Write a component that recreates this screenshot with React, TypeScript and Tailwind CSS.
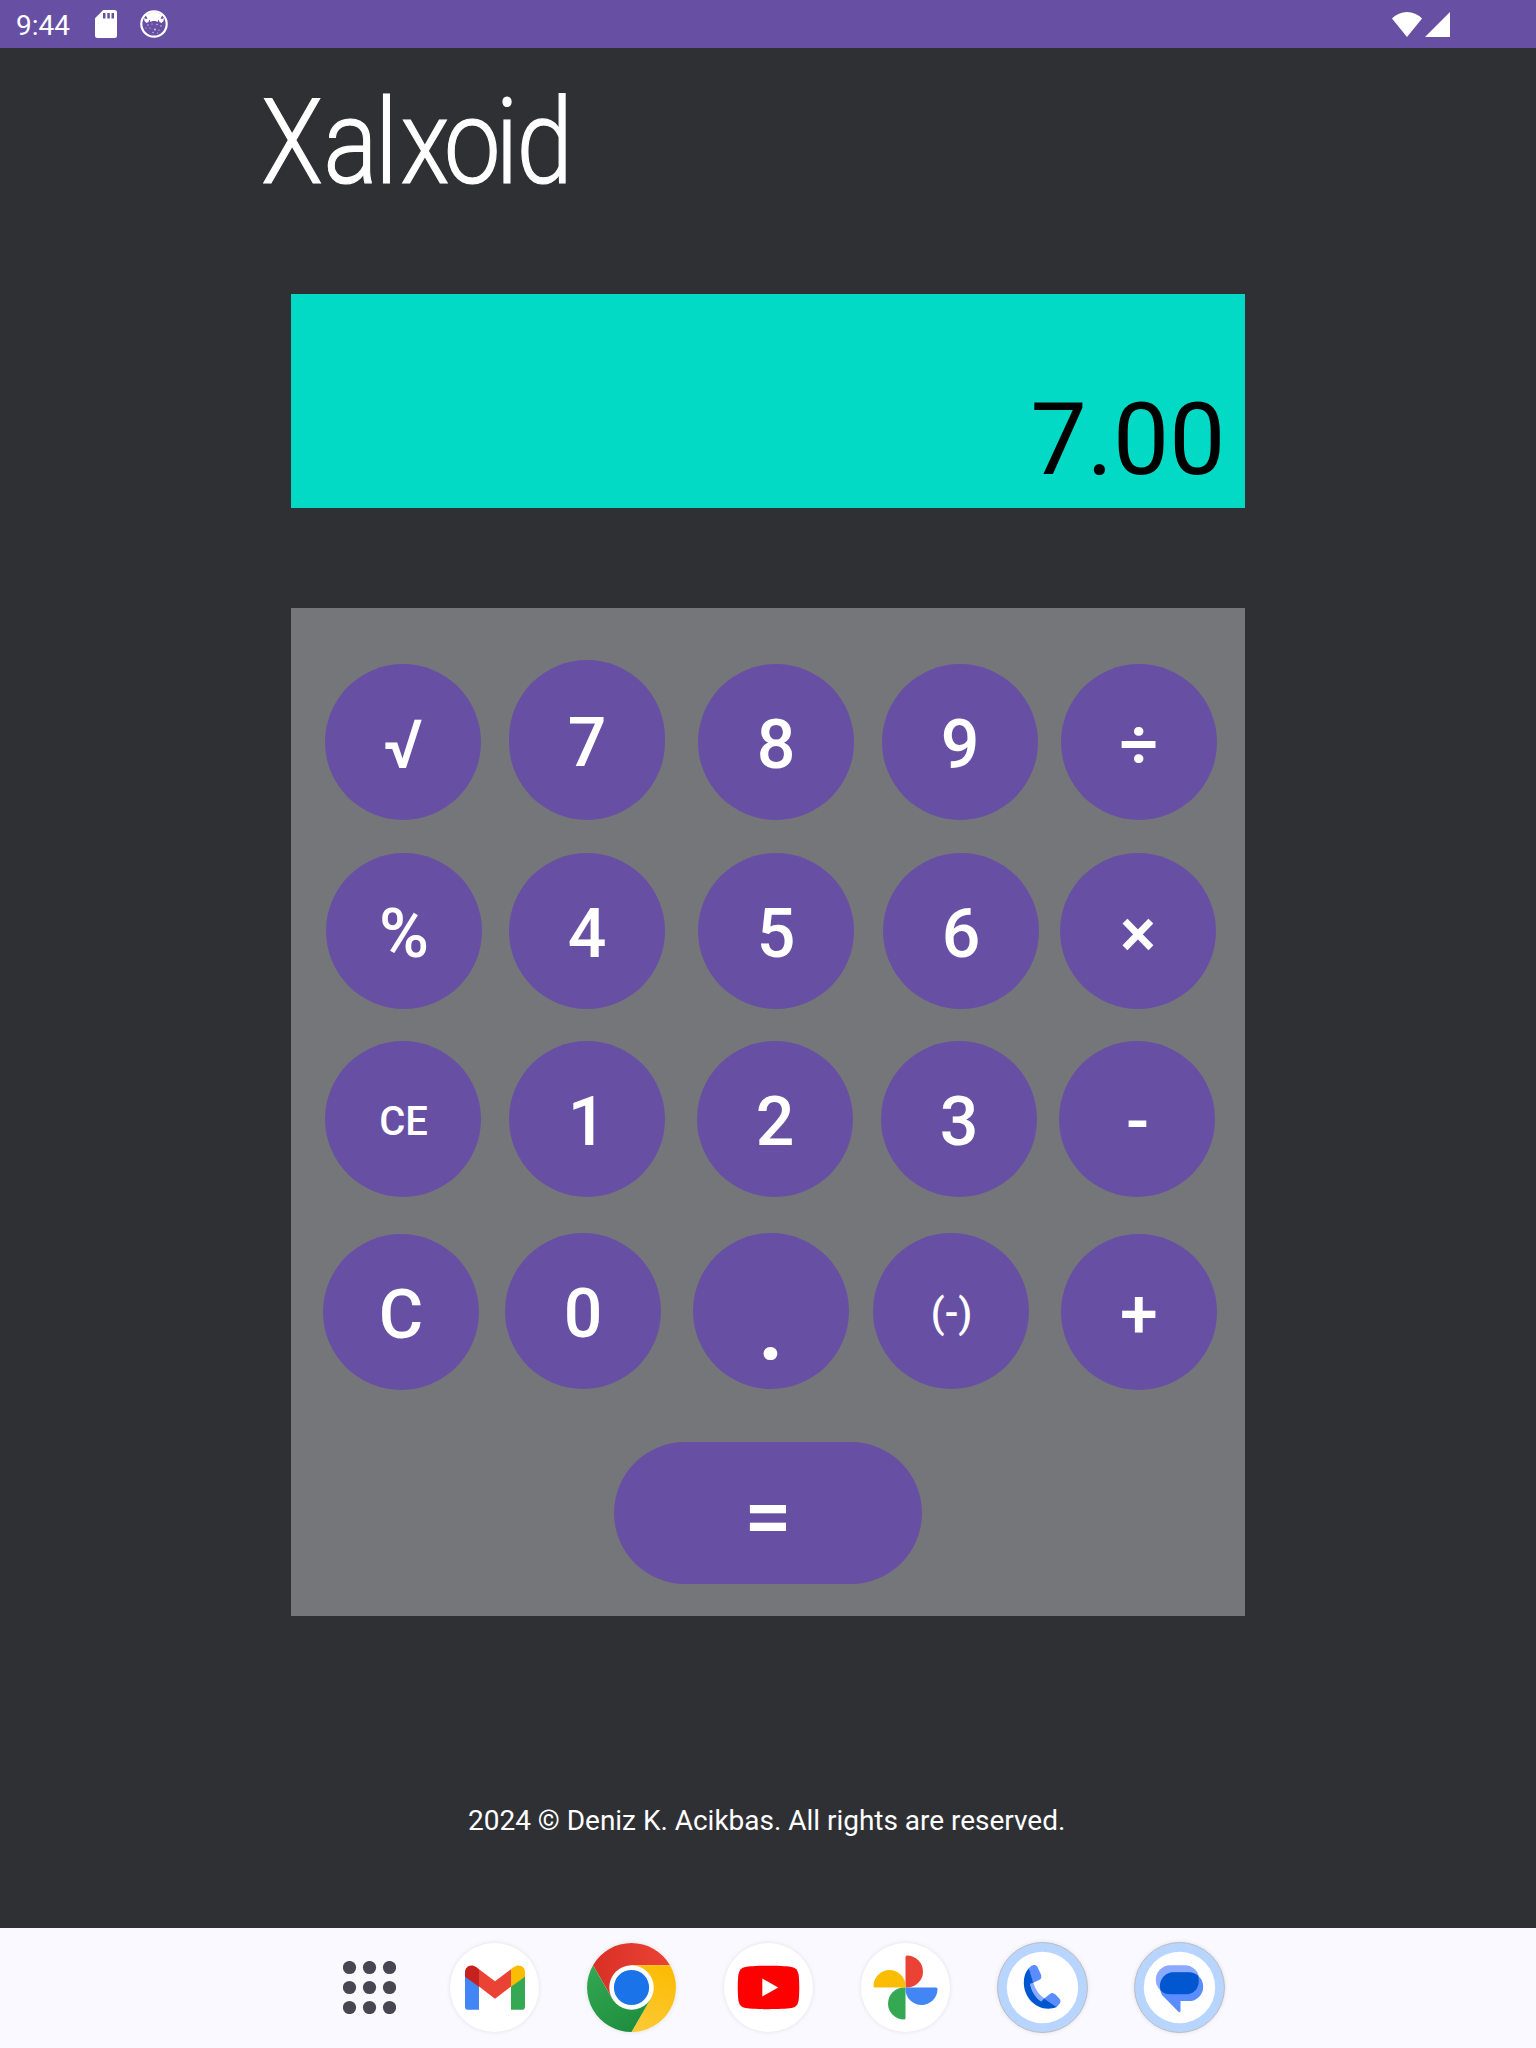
import type { ReactNode } from "react";

type Key = { label: string; box: string; text?: string };

const rows: { row: string; keys: Key[] }[] = [
  {
    row: "h-[160px]",
    keys: [
      { label: "√", box: "ml-[34px] mt-1" },
      { label: "7", box: "ml-[28px] h-[160px]" },
      { label: "8", box: "ml-[33px] mt-1" },
      { label: "9", box: "ml-[28px] mt-1" },
      { label: "÷", box: "ml-[23px] mt-1" },
    ],
  },
  {
    row: "mt-[33px] h-[156px]",
    keys: [
      { label: "%", box: "ml-[35px]" },
      { label: "4", box: "ml-[27px]" },
      { label: "5", box: "ml-[33px]" },
      { label: "6", box: "ml-[29px]" },
      { label: "×", box: "ml-[21px]" },
    ],
  },
  {
    row: "mt-[32px] h-[156px]",
    keys: [
      { label: "CE", box: "ml-[34px]", text: "text-[40px] pt-[5px] pl-px" },
      { label: "1", box: "ml-[28px]" },
      { label: "2", box: "ml-[32px]" },
      { label: "3", box: "ml-[28px]" },
      { label: "-", box: "ml-[22px]", text: "text-[68px] pt-[6px] pl-px" },
    ],
  },
  {
    row: "mt-[36px] h-[157px]",
    keys: [
      { label: "C", box: "ml-[32px] mt-px" },
      { label: "0", box: "ml-[26px]" },
      { label: ".", box: "ml-[32px]", text: "text-[100px] pt-[28px]" },
      { label: "(-)", box: "ml-[24px]", text: "text-[40px] pt-[5px] pl-px" },
      { label: "+", box: "ml-[32px] mt-px" },
    ],
  },
];

function KeyButton({ label, box, text = "text-[68px] pt-[6px]" }: Key) {
  const height = box.includes("h-[160px]") ? "" : "h-[156px]";
  return (
    <button
      className={`flex w-[156px] shrink-0 items-center justify-center rounded-full bg-[#6750a4] leading-none font-medium text-white ${height} ${box} ${text}`}
    >
      {label}
    </button>
  );
}

function StatusBar() {
  return (
    <header className="flex h-12 items-center bg-[#6750a4] text-white">
      <span className="ml-[16px] w-[79px] pt-[4px] text-[28px] leading-none">9:44</span>
      <svg className="h-7 w-[22px]" viewBox="0 0 22 28" fill="#fff">
        <path
          fillRule="evenodd"
          d="M8.2 0H19.5Q22 0 22 2.5V25.5Q22 28 19.5 28H2.5Q0 28 0 25.500V8.200ZM8 3V8.500H10.500V3ZM12.300 3V8.500H14.800V3ZM16.500 3V8.500H19V3Z"
        />
      </svg>
      <svg className="ml-[23px] h-7 w-7" viewBox="0 0 28 28">
        <circle cx="14" cy="14" r="12.7" fill="none" stroke="#fff" strokeWidth="2.2" />
        <path
          d="M5.500 5 14 1.500 22.500 5 20.500 8.500 22 9 24 8 23.500 11 21.500 13 19.500 12 18.700 9.500 17.500 12 15.500 11 12.500 11 10.500 12 9.300 9.500 8.500 12 6.500 13 4.500 11 4 8 6 9 7.500 8.500Z"
          fill="#fff"
        />
        <g fill="#fff" opacity="0.75">
          <circle cx="8" cy="15" r=".7" />
          <circle cx="12" cy="14" r=".6" />
          <circle cx="17" cy="14.500" r=".7" />
          <circle cx="21" cy="16" r=".7" />
          <circle cx="10" cy="18" r=".6" />
          <circle cx="15" cy="19.500" r=".9" />
          <circle cx="19" cy="20" r=".6" />
          <circle cx="13" cy="22.500" r=".7" />
          <circle cx="6" cy="18" r=".5" />
          <circle cx="17.500" cy="23" r=".5" />
        </g>
      </svg>
      <svg className="mr-[3px] ml-auto h-[25px] w-[30px]" viewBox="0 0 30 25" fill="#fff">
        <path d="M0 6.500Q6.500 0 15 0T30 6.500L15 25Z" />
      </svg>
      <svg className="mr-[86px] h-[25px] w-[25px]" viewBox="0 0 25 25" fill="#fff">
        <path d="M25 0V25H0Z" />
      </svg>
    </header>
  );
}

function DockIcon({ children, fill = "#fff" }: { children: ReactNode; fill?: string }) {
  return (
    <svg
      className="h-[89px] w-[89px] shrink-0 overflow-visible drop-shadow-[0_0_2px_rgba(0,0,0,0.1)]"
      viewBox="-44.5 -44.5 89 89"
    >
      <circle r="44.5" fill={fill} />
      {children}
    </svg>
  );
}

function BlueRing() {
  return (
    <>
      <circle r="45" fill="#b8d5ff" stroke="#bcbcc0" strokeWidth="1" />
      <circle r="35.700" fill="#fff" />
    </>
  );
}

function Dock() {
  return (
    <nav className="flex h-[120px] items-center bg-[#faf9ff] pb-px pl-[343px]">
      <svg className="mr-[54px] h-[53px] w-[53px]" viewBox="-26.5 -26.5 53 53" fill="#484751">
        {[-20, 0, 20].map((y) => [-20, 0, 20].map((x) => <circle key={`${x},${y}`} cx={x} cy={y} r="6.6" />))}
      </svg>
      <div className="flex gap-12">
        <DockIcon>
          <path d="M-29.500-12V19.200Q-29.500 22.300-26.400 22.300H-15.500V-4Z" fill="#4285f4" />
          <path d="M30.500-12V19.200Q30.500 22.300 27.400 22.300H16.500V-4Z" fill="#34a853" />
          <path d="M-15.500-18.200.500-6.200 16.500-18.200V-1L.500 11.300-15.500-1Z" fill="#ea4335" />
          <path d="M-15.500-18.200-18-20.200C-23.500-24.500-29.500-21-29.500-15.500V-10.700L-15.500-.8Z" fill="#c5221f" />
          <path d="M16.500-18.200 19-20.200C24.500-24.500 30.500-21 30.500-15.500V-10.700L16.500-.8Z" fill="#fbbc04" />
        </DockIcon>
        <DockIcon>
          <defs>
            <linearGradient id="chromeRed" x1="0" x2="1">
              <stop offset="0" stopColor="#d93025" />
              <stop offset="1" stopColor="#ea4335" />
            </linearGradient>
            <linearGradient id="chromeYellow" x1="0.6" y1="0" x2="0.300" y2="1">
              <stop offset="0" stopColor="#fbbc04" />
              <stop offset="1" stopColor="#fcc934" />
            </linearGradient>
            <linearGradient id="chromeGreen" x1="0" y1="0" x2="0.700" y2="1">
              <stop offset="0" stopColor="#34a853" />
              <stop offset="1" stopColor="#1e8e3e" />
            </linearGradient>
          </defs>
          <path d="M-38.500-22.250A44.500 44.500 0 0 1 38.500-22.250H0L-19.300 11.100Z" fill="url(#chromeRed)" />
          <path d="M38.500-22.250A44.500 44.500 0 0 1 0 44.500L19.300 11.100 0-22.250Z" fill="url(#chromeYellow)" />
          <path d="M0 44.500A44.500 44.500 0 0 1-38.500-22.250L-19.300 11.100 19.300 11.100Z" fill="url(#chromeGreen)" />
          <circle r="22.250" fill="#fff" />
          <circle r="17.600" fill="#1a73e8" />
        </DockIcon>
        <DockIcon>
          <path
            d="M0-21.700C14-21.700 20-21 23-20.600Q29-19.500 30-13.500C31-7 31 7 30 13.500Q29 19.500 23 20.600C14 22-14 22-23 20.600Q-29 19.500-30 13.500C-31 7-31-7-30-13.500Q-29-19.500-23-20.600C-20-21-14-21.700 0-21.700Z"
            fill="#f00"
          />
          <path d="M-6.200-9V9L9.700 0Z" fill="#fff" />
        </DockIcon>
        <DockIcon>
          <path d="M0 0V-30.500Q0-32 1.500-32A16 16 0 0 1 1.500 0Z" fill="#ea4335" />
          <path d="M0 0H30.500Q32 0 32 1.500A16 16 0 0 1 0 1.500Z" fill="#4285f4" />
          <path d="M0 0V30.500Q0 32-1.500 32A16 16 0 0 1-1.500 0Z" fill="#34a853" />
          <path d="M0 0H-30.500Q-32 0-32-1.500A16 16 0 0 1 0-1.500Z" fill="#fbbc04" />
        </DockIcon>
        <DockIcon>
          <BlueRing />
          <path d="M-12.500-4.500-9.300-5.500C-7.500 2-2.500 8.500 2.500 11L-1.300 14C-7 10-11 4-12.500-4.500Z" fill="#8ba9ff" />
          <path d="M-13.500-19.500C-10.500-23-7-23.500-5-20.500L-1.300-12.500Q-.5-9.500-2.500-8L-9.700-4.500-13.500-19.500Z" fill="#5c8dff" />
          <path d="M1.700 11 7 6.800Q10 4 13 7L17 11.200Q19 13.500 17 16.300L14.200 19.500Z" fill="#5c8dff" />
          <path
            d="M-13.500-19.500-9.300-4.800-12.400-3.800C-11 4-7 10-1.300 14L1.800 11 14.300 19.600C-3 26-18.700 12-18.700-5C-18.700-11-17-16-13.500-19.500Z"
            fill="#0057d0"
          />
        </DockIcon>
        <DockIcon>
          <BlueRing />
          <rect x="-23.700" y="-22.200" width="43.500" height="29" rx="14.500" fill="#8ba9ff" />
          <path
            d="M-5.500-15.200H9.300A14.400 14.400 0 0 1 9.300 13.600H1V23.500Q.5 25.500-1.300 24L-17.500 7.500C-22-1-16-15.200-5.500-15.200Z"
            fill="#5c8dff"
          />
          <path
            d="M-6-15.200H9.300Q15-15.200 18.500-11.700C21-4 17.500 6.800 6.500 6.800H-9Q-15 6.800-18.700 3.200C-22-5-16-15.200-6-15.200Z"
            fill="#0057d0"
          />
        </DockIcon>
      </div>
    </nav>
  );
}

export default function App() {
  return (
    <div className="flex h-[2048px] w-[1536px] flex-col overflow-hidden bg-[#2f3034] font-[Roboto,sans-serif]">
      <StatusBar />
      <main className="flex flex-1 flex-col">
        <h1 className="mt-[36px] ml-[261px] h-[118px] origin-left scale-x-[0.86] text-[118px] leading-[118px] font-light whitespace-nowrap text-white [-webkit-text-stroke:1.2px_white]">
          X<span className="tracking-[-3px]">a</span>
          <span className="tracking-[3px]">l</span>
          <span className="tracking-[-7px]">x</span>
          <span className="tracking-[-6px]">o</span>
          <span className="tracking-[-2px]">i</span>d
        </h1>
        <output className="mt-[92px] ml-[291px] flex h-[214px] w-[954px] items-end justify-end bg-[#03dac5] pr-[19.5px] pb-[18px] text-[100px] leading-none text-black">
          7.00
        </output>
        <section className="mt-[100px] ml-[291px] flex h-[1008px] w-[954px] flex-col bg-[#75767a] pt-[52px]">
          {rows.map(({ row, keys }) => (
            <div key={keys[0].label} className={`flex items-start ${row}`}>
              {keys.map((k) => (
                <KeyButton key={k.label} {...k} />
              ))}
            </div>
          ))}
          <button className="mt-[52px] ml-[323px] flex h-[142px] w-[308px] items-center justify-center rounded-full bg-[#6750a4] pt-[8px] text-[85px] leading-none font-medium text-white">
            =
          </button>
        </section>
        <footer className="mt-[191px] pl-[468px] text-[28px] leading-[28px] tracking-[-0.02px] text-white">
          2024 © Deniz K. Acikbas. All rights are reserved.
        </footer>
      </main>
      <Dock />
    </div>
  );
}
